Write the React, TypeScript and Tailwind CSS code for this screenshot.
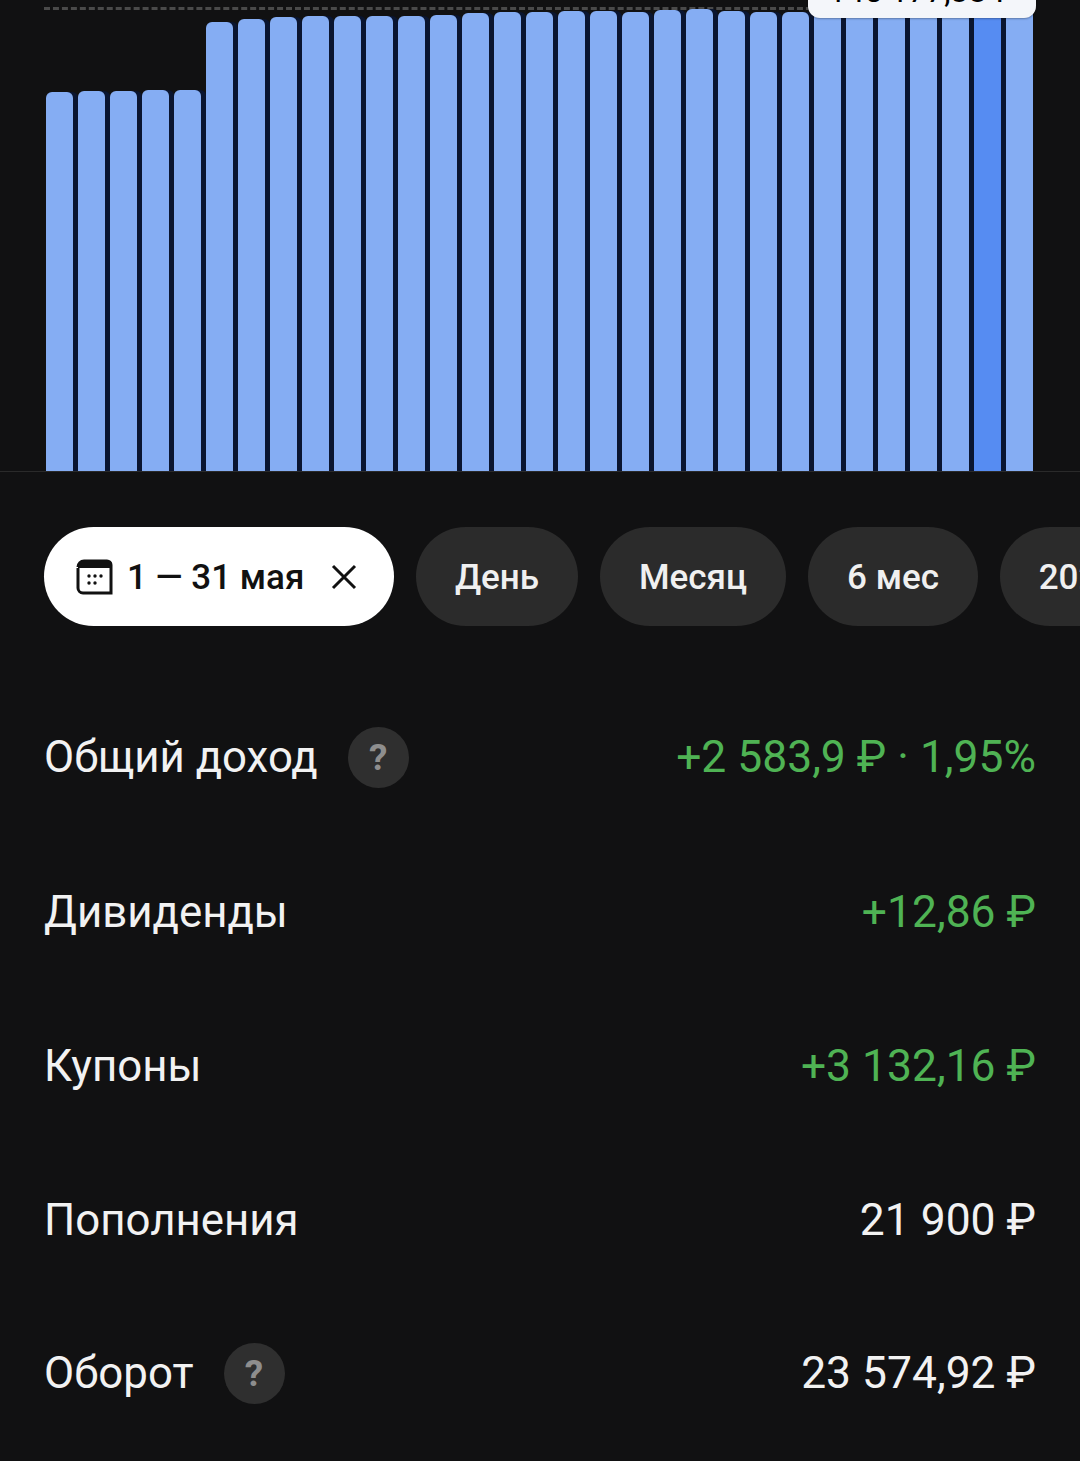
const barTops = [92, 91, 91, 90, 90, 22, 19, 17, 16, 16, 16, 16, 15, 13, 12, 12, 11, 11, 12, 10, 9, 11, 12, 12, 11, 11, 10, 9, 9, 9, 9]

const rows = [
  { label: "Общий доход", value: "+2 583,9 ₽ · 1,95%", green: true, help: true },
  { label: "Дивиденды", value: "+12,86 ₽", green: true, help: false },
  { label: "Купоны", value: "+3 132,16 ₽", green: true, help: false },
  { label: "Пополнения", value: "21 900 ₽", green: false, help: false },
  { label: "Оборот", value: "23 574,92 ₽", green: false, help: true },
]

const pills = [
  { text: "День", width: "w-[162px]" },
  { text: "Месяц", width: "w-[186px]" },
  { text: "6 мес", width: "w-[170px]" },
  { text: "2024", width: "w-[157px]" },
]

function Chart() {
  return (
    <div className="relative h-[472px] border-b border-[#2a2a2a]">
      <div className="absolute left-[44px] right-[44px] top-[7px] border-t-[3px] border-dashed border-[#4a4a4a]" />
      <div className="relative flex h-[471px] items-end gap-[5px] pl-[46px]">
        {barTops.map((top, i) => (
          <div
            key={i}
            className={
              i === 29
                ? "w-[27px] rounded-t-[6px] bg-[#568cf2] shadow-[5px_0_0_#0a1530]"
                : i === 30
                  ? "w-[27px] rounded-t-[6px] bg-[#85adf3]"
                  : "w-[27px] rounded-t-[6px] bg-[#85adf3] shadow-[5px_0_0_#0a1530]"
            }
            style={{ height: 471 - top }}
          />
        ))}
      </div>
      <div className="absolute left-[808px] top-[-30px] flex h-[48px] w-[228px] items-start justify-center rounded-[12px] bg-[#f4f6fa] text-[32px] leading-[42px] text-black shadow-[0_1px_2px_rgba(0,0,0,0.3)]">
        145 177,38 ₽
      </div>
    </div>
  )
}

function Pills() {
  return (
    <div className="mt-[55px] flex gap-[22px] overflow-hidden pl-[44px]">
      <div className="flex h-[99px] w-[350px] shrink-0 items-center rounded-full bg-white pl-[32px] text-[35px] text-[#111]">
        <svg width="38" height="36" viewBox="0 0 38 36" className="shrink-0">
          <path d="M2 9V29a5 5 0 0 0 5 5H35V6a4 4 0 0 0-4-4H8a6 6 0 0 0-6 6" fill="none" stroke="#111" strokeWidth="3" />
          <path d="M2 8a6 6 0 0 1 6-6H32a4 4 0 0 1 4 4V9H2z" fill="#111" />
          <g fill="#111">
            <circle cx="13" cy="17" r="1.7" />
            <circle cx="19" cy="17" r="1.7" />
            <circle cx="25" cy="17" r="1.7" />
            <circle cx="13" cy="24" r="1.7" />
            <circle cx="19" cy="24" r="1.7" />
          </g>
        </svg>
        <span className="ml-[13px] pt-[4px] font-medium">1 — 31 мая</span>
        <svg width="26" height="26" viewBox="0 0 26 26" className="ml-[27px] shrink-0">
          <path d="M2 2L24 24M24 2L2 24" stroke="#111" strokeWidth="3" fill="none" />
        </svg>
      </div>
      {pills.map((p) => (
        <div key={p.text} className={`flex h-[99px] shrink-0 items-center justify-center rounded-full bg-[#2b2b2b] pt-[4px] text-[35px] font-medium text-[#f0f0f0] ${p.width}`}>
          {p.text}
        </div>
      ))}
    </div>
  )
}

export default function App() {
  return (
    <div className="h-[1461px] w-[1080px] overflow-hidden bg-[#111112] font-['Roboto',sans-serif]">
      <Chart />
      <Pills />
      <div className="mt-[55px] flex flex-col px-[44px]">
        {rows.map((r) => (
          <div key={r.label} className={r.help ? "flex h-[154px] -translate-y-px items-center justify-between leading-none" : "flex h-[154px] items-center justify-between leading-none"}>
            <div className="flex items-center gap-[30px] text-[43.8px] text-[#f2f2f2]">
              <span className="pt-[2px]">{r.label}</span>
              {r.help && (
                <span className="flex h-[61px] w-[61px] items-center justify-center rounded-full bg-[#2f2f2f] text-[37px] font-bold text-[#8e8e8e]">?</span>
              )}
            </div>
            <span className={r.green ? "text-[44.4px] text-[#4fb354]" : "text-[44.4px] text-[#f2f2f2]"}>{r.value}</span>
          </div>
        ))}
      </div>
    </div>
  )
}
